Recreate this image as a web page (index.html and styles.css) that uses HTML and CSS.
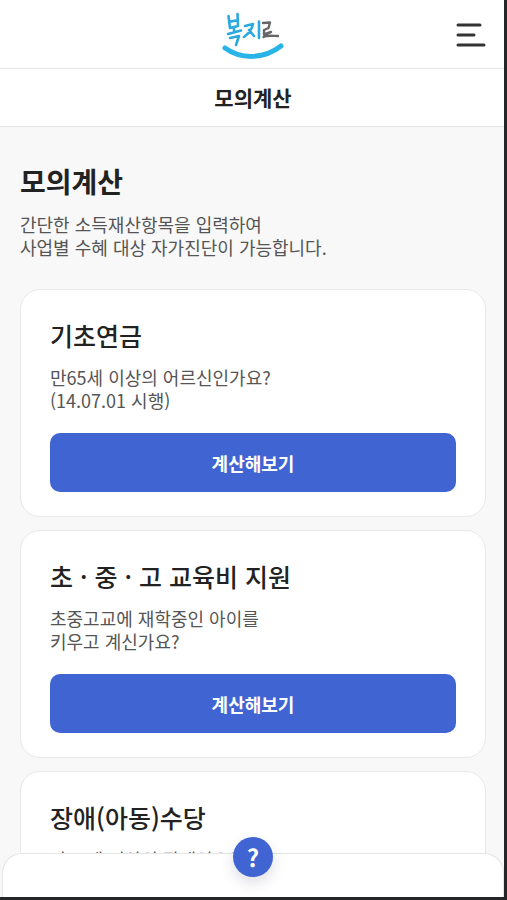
FILE: index.html
```html
<!DOCTYPE html>
<html lang="ko">
<head>
<meta charset="utf-8">
<meta name="viewport" content="width=device-width, initial-scale=1">
<title>모의계산 - 복지로</title>
<link rel="stylesheet" href="styles.css">
</head>
<body>
<div class="screen">
  <header class="header">
    <a class="logo" href="#" aria-label="복지로">
      <svg width="64" height="52" viewBox="0 0 64 52" fill="none" stroke-linecap="round" stroke-linejoin="round">
        <g stroke="#2ba9df" stroke-width="2.6">
          <path d="M7.5 7L9 19M16.5 5L17 17M8 13L17 11M9 19L17 17M13 18V23M7 25L20 21.500M9 29L18 27L15 36"/>
          <path d="M24 17L32 15C31 20 27 25 23 28M28 21L33 27M38 12.500V29"/>
        </g>
        <path stroke="#666" stroke-width="2.400" d="M42 14L49 13.500L47.500 19L43 21V25.500L50 23M42.500 28C46 26 52 27 57 27"/>
        <path stroke="#29b4e8" stroke-width="5" d="M4 39C19 50 42 51 60 37"/>
      </svg>
    </a>
    <button class="menu" type="button" aria-label="메뉴">
      <svg width="30" height="24" viewBox="0 0 30 24" fill="none" stroke="#333" stroke-width="3" stroke-linecap="round">
        <path d="M2 2h22M2 12h16M2 22h26"/>
      </svg>
    </button>
  </header>
  <div class="title-bar">모의계산</div>
  <main class="content">
    <h1 class="page-title">모의계산</h1>
    <p class="description">간단한 소득재산항목을 입력하여<br>사업별 수혜 대상 자가진단이 가능합니다.</p>
    <div class="cards">
      <section class="card">
        <h2 class="card-title">기초연금</h2>
        <p class="description">만65세 이상의 어르신인가요?<br>(14.07.01 시행)</p>
        <button class="calculate" type="button">계산해보기</button>
      </section>
      <section class="card">
        <h2 class="card-title">초 · 중 · 고 교육비 지원</h2>
        <p class="description">초중고교에 재학중인 아이를<br>키우고 계신가요?</p>
        <button class="calculate" type="button">계산해보기</button>
      </section>
      <section class="card">
        <h2 class="card-title">장애(아동)수당</h2>
        <p class="description">만18세 이상의 장애인으로<br>등록되어 있나요?</p>
        <button class="calculate" type="button">계산해보기</button>
      </section>
    </div>
  </main>
  <div class="sheet">
    <button class="help" type="button" aria-label="도움말">?</button>
  </div>
</div>
</body>
</html>
```
FILE: styles.css
```css
* {
  box-sizing: border-box;
}

body {
  margin: 0;
  background: #252628;
  color: #222;
  font-family: "Noto Sans CJK KR", sans-serif;
}

button {
  font-family: inherit;
  border: 0;
  padding: 0;
}

.screen {
  position: relative;
  display: flex;
  flex-direction: column;
  height: 100vh;
  overflow: hidden;
  background: #f8f8f8;
  border-right: 3px solid #252628;
  border-bottom: 3px solid #252628;
}

.header {
  display: grid;
  grid-template-columns: 1fr auto 1fr;
  align-items: center;
  flex: none;
  height: 69px;
  padding: 1px 18px 0 20px;
  background: #fff;
  border-bottom: 1px solid #e5e5e5;
}

.logo {
  grid-column: 2;
  display: flex;
}

.menu {
  display: flex;
  justify-self: end;
  background: none;
}

.title-bar {
  flex: none;
  padding: 13px 18px 14px 20px;
  background: #fff;
  border-bottom: 1px solid #e5e5e5;
  font-size: 21px;
  line-height: 30px;
  font-weight: 700;
  text-align: center;
}

.content {
  flex: 1;
  min-height: 0;
  padding: 34px 18px 64px 20px;
  overflow-y: auto;
  scrollbar-width: none;
}

.page-title {
  margin: 0 0 12px;
  font-size: 28px;
  line-height: 40px;
  font-weight: 700;
}

.description {
  margin: 0;
  color: #555;
  font-size: 18px;
  line-height: 23px;
}

.cards {
  display: flex;
  flex-direction: column;
  gap: 13px;
  margin-top: 30px;
}

.card {
  padding: 27px 29px 24px;
  background: #fff;
  border: 1px solid #e8e8e8;
  border-radius: 20px;
}

.card-title {
  margin: 0 0 13px;
  font-size: 25px;
  line-height: 36px;
  font-weight: 500;
}

.calculate {
  display: block;
  width: 100%;
  height: 59px;
  margin-top: 21px;
  background: #4064d2;
  border-radius: 10px;
  color: #fff;
  font-size: 18px;
  font-weight: 700;
}

.sheet {
  position: absolute;
  right: 0;
  bottom: 0;
  left: 2px;
  height: 44px;
  background: #fff;
  border: 1px solid #e5e5e5;
  border-bottom: 0;
  border-radius: 20px 20px 0 0;
}

.help {
  position: absolute;
  top: -17px;
  left: 50%;
  width: 40px;
  height: 40px;
  transform: translateX(-50%);
  background: #4064d2;
  border-radius: 50%;
  box-shadow: 0 6px 14px rgba(40, 40, 90, 0.15);
  color: #fff;
  font-size: 24px;
  line-height: 40px;
  font-weight: 700;
}
```
